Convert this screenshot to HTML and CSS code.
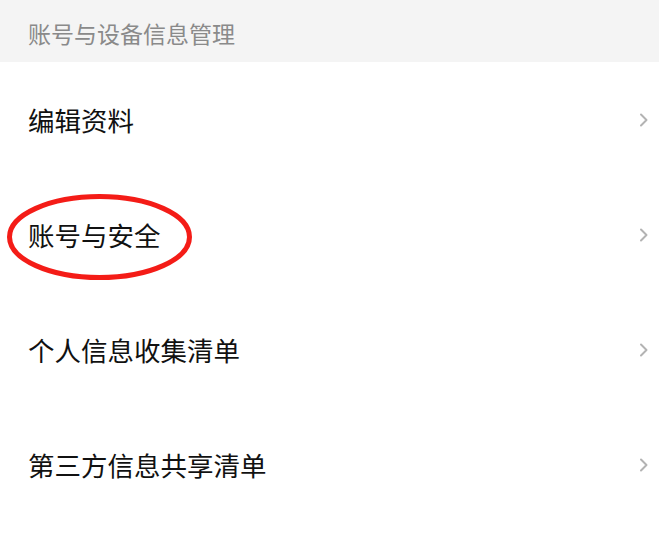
FILE: index.html
```html
<!DOCTYPE html>
<html lang="zh-CN">
<head>
<meta charset="utf-8">
<title>账号与设备信息管理</title>
<link rel="stylesheet" href="styles.css">
</head>
<body>
<div class="page">
  <div class="section-header">账号与设备信息管理</div>
  <ul class="list">
    <li class="item"><span class="label">编辑资料</span><svg class="chev" viewBox="0 0 10 14" width="10" height="14"><path d="M2 1.5 L7.5 7 L2 12.5" fill="none" stroke="#b3b3b3" stroke-width="2" stroke-linecap="round" stroke-linejoin="round"/></svg></li>
    <li class="item highlighted"><span class="label">账号与安全</span><svg class="chev" viewBox="0 0 10 14" width="10" height="14"><path d="M2 1.5 L7.5 7 L2 12.5" fill="none" stroke="#b3b3b3" stroke-width="2" stroke-linecap="round" stroke-linejoin="round"/></svg>
      <svg class="circle-mark" viewBox="0 0 185 86" width="185" height="86"><ellipse cx="92.5" cy="43" rx="90" ry="40.5" fill="none" stroke="#f41c17" stroke-width="5"/></svg>
    </li>
    <li class="item"><span class="label">个人信息收集清单</span><svg class="chev" viewBox="0 0 10 14" width="10" height="14"><path d="M2 1.5 L7.5 7 L2 12.5" fill="none" stroke="#b3b3b3" stroke-width="2" stroke-linecap="round" stroke-linejoin="round"/></svg></li>
    <li class="item"><span class="label">第三方信息共享清单</span><svg class="chev" viewBox="0 0 10 14" width="10" height="14"><path d="M2 1.5 L7.5 7 L2 12.5" fill="none" stroke="#b3b3b3" stroke-width="2" stroke-linecap="round" stroke-linejoin="round"/></svg></li>
  </ul>
</div>
</body>
</html>
```

FILE: styles.css
```css
html, body {
  margin: 0;
  padding: 0;
  background: #ffffff;
}
body {
  font-family: "Noto Sans CJK SC", "Noto Sans", sans-serif;
  width: 659px;
  height: 543px;
  overflow: hidden;
}
.page {
  display: flex;
  flex-direction: column;
}
.section-header {
  height: 62px;
  box-sizing: border-box;
  padding: 3px 0 0 28px;
  background: #f4f4f4;
  color: #8a8a8a;
  font-size: 23px;
  display: flex;
  align-items: center;
}
.list {
  list-style: none;
  margin: 0;
  padding: 0;
}
.item {
  position: relative;
  height: 115px;
  box-sizing: border-box;
  padding: 0 10px 0 28px;
  display: flex;
  align-items: center;
  justify-content: space-between;
  color: #111111;
  font-size: 26.5px;
}
.chev {
  display: block;
}
.circle-mark {
  position: absolute;
  left: 7px;
  top: 17px;
  pointer-events: none;
}
```
